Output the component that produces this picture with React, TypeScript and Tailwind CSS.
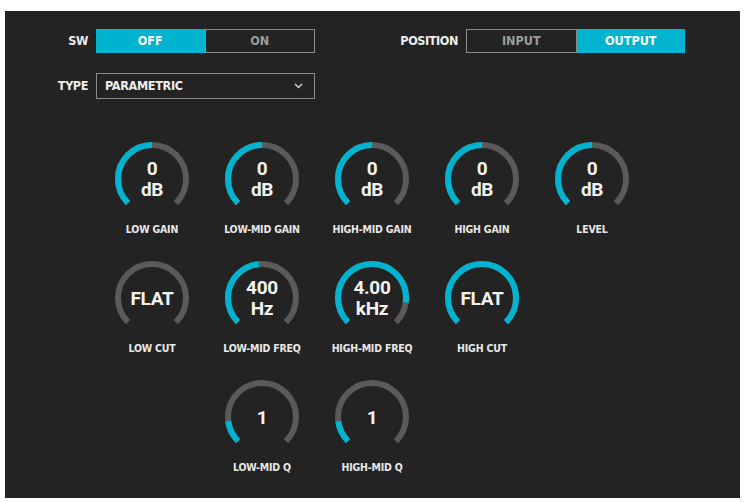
import React from "react";

const CYAN = "#00b4cf";
const narrow = { fontFamily: '"Liberation Sans Narrow", "DejaVu Sans Condensed", "Roboto", sans-serif' };
const roboto = { fontFamily: 'Roboto, "Liberation Sans", sans-serif' };

type KnobProps = { value: string[]; label: string; frac: number };

function Knob({ value, label, frac }: KnobProps) {
  const r = 34;
  const c = 2 * Math.PI * r;
  const sweep = c * 0.75;
  const on = sweep * frac;
  return (
    <div className="flex flex-col items-center">
      <div className="relative w-[76px] h-[76px]">
        <svg width="76" height="76" viewBox="0 0 76 76" className="absolute inset-0">
          <circle cx="38" cy="38" r={r} fill="none" stroke="#5a5a5a" strokeWidth="6"
            strokeDasharray={`${sweep} ${c}`} transform="rotate(135 38 38)" />
          {on > 0 && (
            <circle cx="38" cy="38" r={r} fill="none" stroke={CYAN} strokeWidth="6"
              strokeDasharray={`${on} ${c}`} transform="rotate(135 38 38)" />
          )}
        </svg>
        <div className="absolute inset-0 flex flex-col items-center justify-center text-[19px] leading-[21px] font-bold text-[#f2f2f2] tracking-[-0.3px]" style={roboto}>
          {value.map((v) => (
            <span key={v}>{v}</span>
          ))}
        </div>
      </div>
      <div className="mt-[5px] text-[10.5px] leading-[14px] font-bold text-[#e8e8e8] whitespace-nowrap tracking-[-0.2px]" style={narrow}>
        {label}
      </div>
    </div>
  );
}

function Segmented({ items, active }: { items: string[]; active: number }) {
  return (
    <div className="flex w-[219px] h-[24px]">
      {items.map((it, i) =>
        i === active ? (
          <div key={it} className="flex-1 flex items-center justify-center bg-[#00b4cf] text-white text-[12.5px] font-bold">
            {it}
          </div>
        ) : (
          <div key={it} className="flex-1 flex items-center justify-center border border-[#8c8c8c] text-[#9c9c9c] text-[12.5px] font-bold">
            {it}
          </div>
        )
      )}
    </div>
  );
}

export default function App() {
  return (
    <div className="w-[746px] h-[502px] bg-white pt-[11px] pl-[5px]">
      <div className="w-[735px] h-[487px] bg-[#232323]" style={narrow}>
        <div className="pt-[18px]">
          <div className="flex items-center">
            <div className="w-[91px] pr-[8px] text-right text-[12.5px] font-bold text-[#eeeeee] tracking-[-0.4px]">SW</div>
            <Segmented items={["OFF", "ON"]} active={0} />
            <div className="w-[151px] pr-[8px] text-right text-[12.5px] font-bold text-[#eeeeee] tracking-[-0.4px]">POSITION</div>
            <Segmented items={["INPUT", "OUTPUT"]} active={1} />
          </div>
          <div className="flex items-center mt-[20px]">
            <div className="w-[91px] pr-[8px] text-right text-[12.5px] font-bold text-[#eeeeee] tracking-[-0.4px]">TYPE</div>
            <div className="w-[219px] h-[26px] border border-[#8c8c8c] flex items-center justify-between px-[8px] text-[12.5px] font-bold text-[#eeeeee] tracking-[-0.3px]">
              <span>PARAMETRIC</span>
              <svg width="9" height="6" viewBox="0 0 9 6" className="mr-[3px]">
                <path d="M1 1 L4.5 4.5 L8 1" fill="none" stroke="#cfcfcf" strokeWidth="1.5" />
              </svg>
            </div>
          </div>
        </div>
        <div className="grid grid-cols-[repeat(5,110px)] gap-y-[24px] pl-[92px] mt-[42px]">
          <Knob value={["0", "dB"]} label="LOW GAIN" frac={0.5} />
          <Knob value={["0", "dB"]} label="LOW-MID GAIN" frac={0.5} />
          <Knob value={["0", "dB"]} label="HIGH-MID GAIN" frac={0.5} />
          <Knob value={["0", "dB"]} label="HIGH GAIN" frac={0.5} />
          <Knob value={["0", "dB"]} label="LEVEL" frac={0.5} />
          <Knob value={["FLAT"]} label="LOW CUT" frac={0} />
          <Knob value={["400", "Hz"]} label="LOW-MID FREQ" frac={0.48} />
          <Knob value={["4.00", "kHz"]} label="HIGH-MID FREQ" frac={0.86} />
          <Knob value={["FLAT"]} label="HIGH CUT" frac={1} />
          <div />
          <div />
          <Knob value={["1"]} label="LOW-MID Q" frac={0.14} />
          <Knob value={["1"]} label="HIGH-MID Q" frac={0.14} />
        </div>
      </div>
    </div>
  );
}
